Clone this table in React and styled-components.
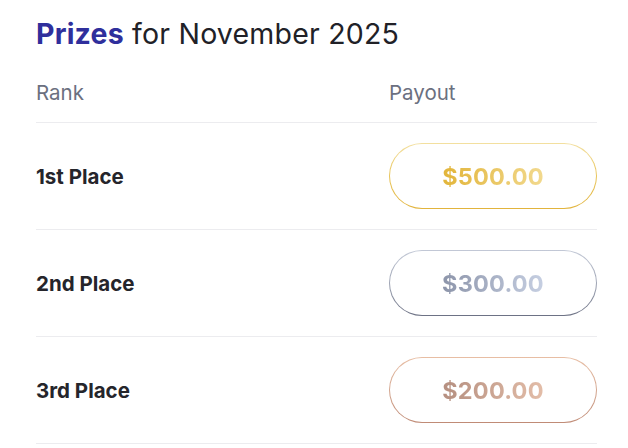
import React from 'react';
import styled, { createGlobalStyle } from 'styled-components';

const Global = createGlobalStyle`
  body {
    margin: 0;
    background: #ffffff;
    font-family: Inter, "Noto Sans", sans-serif;
    color: #212127;
  }
`;

const Page = styled.div`
  width: 561px;
  padding: 16px 0 0 36px;
`;

const Title = styled.h2`
  margin: 0;
  font-size: 28.5px;
  font-weight: 400;
  letter-spacing: 0.2px;
  color: #212127;
  line-height: 36px;
  span {
    font-weight: 700;
    color: #2f2f9c;
  }
`;

const Table = styled.div`
  margin-top: 10px;
`;

const HeadRow = styled.div`
  display: grid;
  grid-template-columns: 1fr 208px;
  height: 60px;
  align-items: center;
  border-bottom: 1px solid #ececef;
  font-size: 20.5px;
  color: #6b7080;
`;

const Row = styled.div`
  display: grid;
  grid-template-columns: 1fr 208px;
  align-items: center;
  padding: 20px 0;
  border-bottom: 1px solid #ececef;
`;

const Place = styled.div`
  font-size: 20.5px;
  font-weight: 700;
  color: #25252b;
`;

const Pill = styled.div`
  height: 66px;
  box-sizing: border-box;
  border-radius: 33px;
  border: 1.5px solid transparent;
  background: linear-gradient(#fff, #fff) padding-box, ${(p) => p.$border} border-box;
  display: flex;
  align-items: center;
  justify-content: center;
`;

const Amount = styled.span`
  font-size: 23.5px;
  font-weight: 700;
  letter-spacing: 0.2px;
  background: ${(p) => p.$text};
  -webkit-background-clip: text;
  background-clip: text;
  color: transparent;
`;

const prizes = [
  {
    place: '1st Place',
    amount: '$500.00',
    text: 'linear-gradient(90deg, #e2b53a, #f2d98e)',
    border: 'linear-gradient(180deg, #f3e0a0 0%, #e8c458 50%, #e2b43c 100%)',
  },
  {
    place: '2nd Place',
    amount: '$300.00',
    text: 'linear-gradient(90deg, #8d95aa, #c6cfe2)',
    border: 'linear-gradient(180deg, #c2c8d6 0%, #9ea4b4 50%, #6c7184 100%)',
  },
  {
    place: '3rd Place',
    amount: '$200.00',
    text: 'linear-gradient(90deg, #b58f80, #e3bda8)',
    border: 'linear-gradient(180deg, #e8bea4 0%, #d3a58e 50%, #c08b76 100%)',
  },
];

export default function App() {
  return (
    <Page>
      <Global />
      <Title>
        <span>Prizes</span> for November 2025
      </Title>
      <Table>
        <HeadRow>
          <div>Rank</div>
          <div>Payout</div>
        </HeadRow>
        {prizes.map((p) => (
          <Row key={p.place}>
            <Place>{p.place}</Place>
            <Pill $border={p.border}>
              <Amount $text={p.text}>{p.amount}</Amount>
            </Pill>
          </Row>
        ))}
      </Table>
    </Page>
  );
}
